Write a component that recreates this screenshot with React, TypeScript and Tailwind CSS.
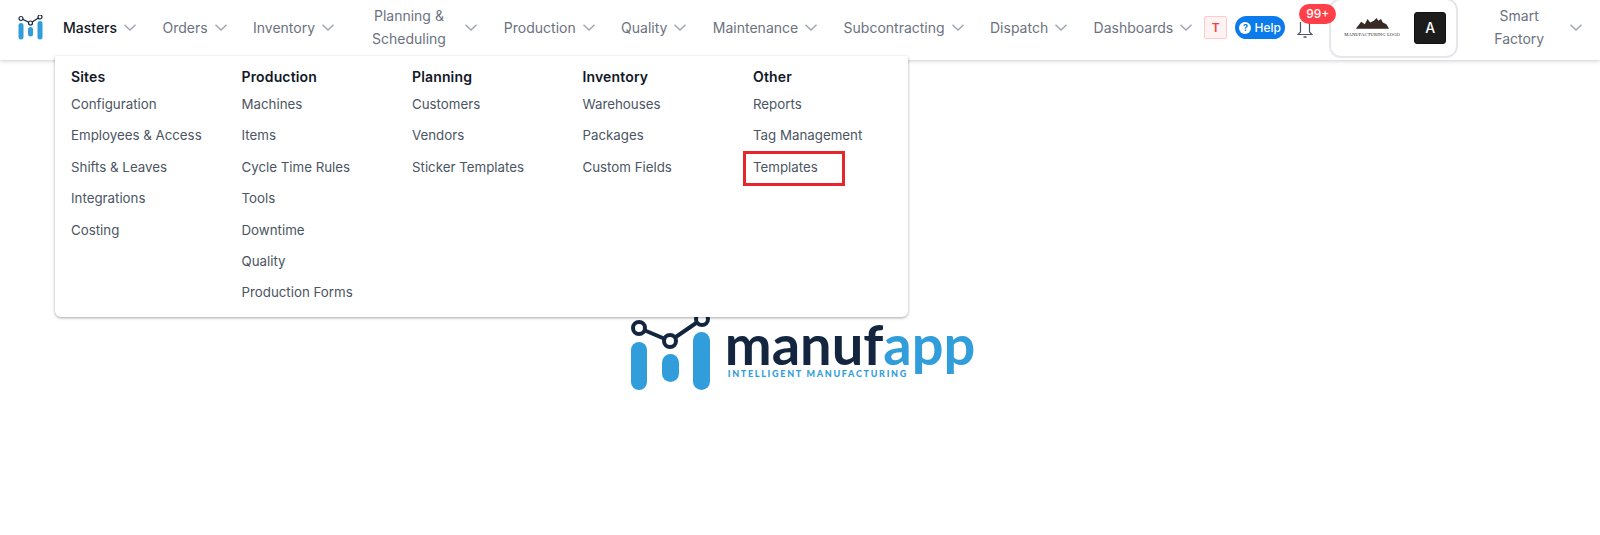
import React from "react";

const Chevron = ({ className = "" }: { className?: string }) => (
  <svg width="12" height="7" viewBox="0 0 12 7" fill="none" className={"shrink-0 " + className}>
    <path d="M0.5 0.7 L6 6 L11.5 0.7" stroke="#9ca3af" strokeWidth="1.3" />
  </svg>
);

const Mark = ({ className }: { className: string }) => (
  <svg viewBox="0 0 80 72" className={className} fill="none">
    <rect x="2" y="23" width="16" height="48" rx="8" fill="#319edb" />
    <rect x="33" y="35" width="17" height="28" rx="8.5" fill="#319edb" />
    <rect x="64" y="13" width="17" height="58" rx="8.5" fill="#319edb" />
    <path d="M10 9 L41 22 L73 0" stroke="#14263f" strokeWidth="4" />
    <circle cx="10" cy="9" r="6" fill="#fff" stroke="#14263f" strokeWidth="4" />
    <circle cx="41" cy="22" r="6" fill="#fff" stroke="#14263f" strokeWidth="4" />
    <circle cx="73" cy="0" r="6" fill="#fff" stroke="#14263f" strokeWidth="4" />
  </svg>
);

const MiniMark = () => (
  <svg viewBox="0 0 25 25" className="w-[25px] h-[25px] shrink-0" fill="none">
    <rect x="0.5" y="8" width="5" height="16.5" rx="2.5" fill="#319edb" />
    <rect x="10" y="12" width="5" height="9.5" rx="2.5" fill="#319edb" />
    <rect x="19.5" y="6" width="5" height="18.5" rx="2.5" fill="#319edb" />
    <path d="M3 3.5 L12.5 8 L22 2" stroke="#14263f" strokeWidth="1.2" />
    <circle cx="3" cy="3.5" r="2" fill="#fff" stroke="#14263f" strokeWidth="1.2" />
    <circle cx="12.5" cy="8" r="2" fill="#fff" stroke="#14263f" strokeWidth="1.2" />
    <circle cx="22" cy="2" r="2" fill="#fff" stroke="#14263f" strokeWidth="1.2" />
  </svg>
);

const simpleNav = ["Production", "Quality", "Maintenance", "Subcontracting", "Dispatch", "Dashboards"];

const NavItem = ({ label, active }: { label: string; active?: boolean }) => (
  <div className="flex items-center gap-[7px] shrink-0">
    <span className={active ? "text-[#111827] font-medium" : "text-[#6b7280] font-normal"}>{label}</span>
    <Chevron />
  </div>
);

const columns = [
  { title: "Sites", items: ["Configuration", "Employees & Access", "Shifts & Leaves", "Integrations", "Costing"] },
  { title: "Production", items: ["Machines", "Items", "Cycle Time Rules", "Tools", "Downtime", "Quality", "Production Forms"] },
  { title: "Planning", items: ["Customers", "Vendors", "Sticker Templates"] },
  { title: "Inventory", items: ["Warehouses", "Packages", "Custom Fields"] },
  { title: "Other", items: ["Reports", "Tag Management", "Templates"] },
];

export default function App() {
  return (
    <div className="relative h-[535px] overflow-hidden bg-white font-['Inter',sans-serif] text-[14px]">
      <header className="relative flex h-[60px] items-center bg-white pb-[5px] pl-[18px] shadow-[0_1px_4px_rgba(0,0,0,0.2)]">
        <MiniMark />
        <div className="ml-[20px] flex items-center gap-[26.4px]">
          <NavItem label="Masters" active />
          <NavItem label="Orders" />
          <NavItem label="Inventory" />
          <div className="flex items-center gap-[8px]">
            <span className="w-[97px] text-center font-normal leading-[22.5px] text-[#6b7280]">Planning &amp; Scheduling</span>
            <Chevron />
          </div>
          {simpleNav.map((n) => (
            <NavItem key={n} label={n} />
          ))}
        </div>
        <div className="ml-[12px] flex h-[23px] w-[23px] shrink-0 items-center justify-center rounded-[2px] border border-[#fecaca] bg-[#fef2f2] text-[12px] font-semibold text-[#ef4444]">
          T
        </div>
        <div className="ml-[8px] flex h-[23px] w-[50px] shrink-0 items-center justify-center gap-[3px] rounded-full bg-[#0b7bec] text-[12px] font-medium text-white">
          <span className="flex h-[12px] w-[12px] items-center justify-center rounded-full bg-white text-[9px] font-bold leading-none text-[#0b7bec]">?</span>
          Help
        </div>
        <div className="relative z-20 ml-[12px] h-[20px] w-[16px] shrink-0">
          <svg viewBox="0 0 16 20" className="absolute left-0 top-[1px] h-[20px] w-[16px]" fill="none">
            <path d="M3.5 3 V13 L1 15.5 H15 L12.5 13 V3" stroke="#4b5563" strokeWidth="1.2" />
            <path d="M6.5 18 H9.5" stroke="#4b5563" strokeWidth="1.5" />
          </svg>
          <span className="absolute -top-[14px] left-[2px] flex h-[20px] w-[37px] items-center justify-center rounded-full bg-[#ff4049] text-[12px] font-medium text-white">
            99+
          </span>
        </div>
        <div className="relative z-10 ml-[16px] flex h-[60px] w-[129px] shrink-0 items-center justify-between rounded-[12px] border-2 border-[#e5e7eb] bg-white pl-[12px] pr-[10px]">
          <div className="flex w-[58px] flex-col items-center">
            <svg viewBox="0 0 40 13" className="h-[12px] w-[36px]" fill="#3a2a25">
              <path d="M2 13 L8 5 L12 8 L15 2 L18 6 L22 4 L25 1 L27 4 L30 2 L32 6 L36 8 L39 13 Z" />
            </svg>
            <span className="mt-[3px] whitespace-nowrap font-['Liberation_Serif',serif] text-[4.6px] leading-[6px] tracking-[0.1px] text-[#222]">
              MANUFACTURING LOGO
            </span>
          </div>
          <div className="flex h-[32px] w-[32px] items-center justify-center rounded-[3px] border border-[#111] bg-[#1c1c1c] text-[14px] font-medium text-white">
            A
          </div>
        </div>
        <div className="ml-[18px] flex items-center gap-[8px]">
          <span className="w-[86px] text-center font-normal leading-[22.5px] text-[#6b7280]">Smart Factory</span>
          <Chevron />
        </div>
      </header>

      <div className="absolute left-[55px] top-[56px] z-30 grid h-[261px] w-[853px] grid-cols-[170.5px_170.5px_170.5px_170.5px_1fr] rounded-b-[6px] bg-white pl-[16px] pt-[11px] shadow-[0_1px_3px_rgba(0,0,0,0.35)]">
        {columns.map((c) => (
          <div key={c.title}>
            <div className="mb-[3px] h-[19px] leading-[19px] font-semibold tracking-[0.15px] text-[#111827]">{c.title}</div>
            {c.items.map((it) => (
              <div key={it} className="relative h-[31.4px] text-[13.3px] leading-[31.4px] text-[#4b5563]">
                {it}
                {it === "Templates" && (
                  <span className="absolute -left-[10px] -top-[1px] h-[35px] w-[102px] border-[3px] border-[#e5262c]" />
                )}
              </div>
            ))}
          </div>
        ))}
      </div>

      <main className="flex justify-center pl-[4px] pt-[259px]">
        <div className="flex items-start">
          <Mark className="h-[72px] w-[80px] shrink-0 overflow-visible" />
          <div className="ml-[16px] mt-[1px] flex flex-col">
            <div className="font-['Lato',sans-serif] text-[56px] font-bold leading-[48px]">
              <span className="text-[#14263f]">manuf</span>
              <span className="text-[#319edb]">app</span>
            </div>
            <div className="ml-[3px] mt-[1px] font-['Lato',sans-serif] text-[9px] font-black leading-[10px] tracking-[1.7px] text-[#319edb]">
              INTELLIGENT MANUFACTURING
            </div>
          </div>
        </div>
      </main>
    </div>
  );
}
